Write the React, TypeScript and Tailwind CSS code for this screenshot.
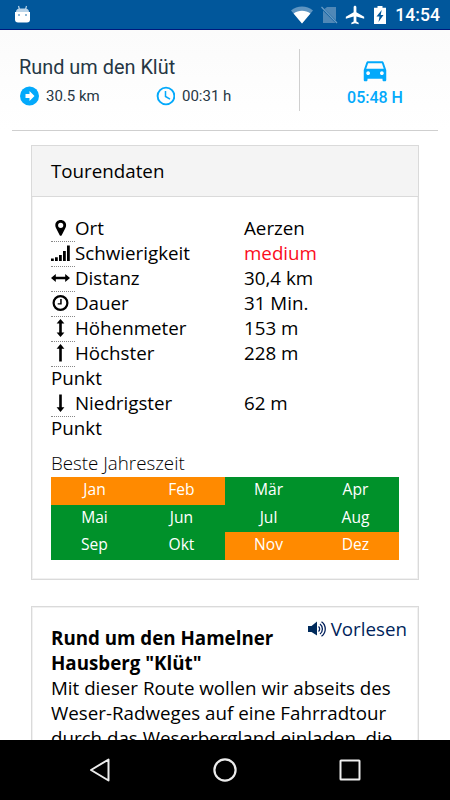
import type { ReactNode } from "react"
import { MdAirplanemodeActive } from "react-icons/md"

const MONTHS = [
  { name: "Jan", best: false },
  { name: "Feb", best: false },
  { name: "Mär", best: true },
  { name: "Apr", best: true },
  { name: "Mai", best: true },
  { name: "Jun", best: true },
  { name: "Jul", best: true },
  { name: "Aug", best: true },
  { name: "Sep", best: true },
  { name: "Okt", best: true },
  { name: "Nov", best: false },
  { name: "Dez", best: false },
]

/* Row icons share a 20x20 box */
const ICONS: Record<string, ReactNode> = {
  pin: (
    <path
      fillRule="evenodd"
      d="M9.7 2C6.600 2 4.300 4.200 4.300 7.200c0 1.100.3 2 .7 2.800l3.700 7.200c.4.8 1.600.8 2 0l3.700-7.200c.4-.8.7-1.700.7-2.800C15.100 4.200 12.700 2 9.700 2zm0 2.700a2.600 2.600 0 1 1 0 5.200 2.600 2.600 0 0 1 0-5.200z"
    />
  ),
  signal: <path d="M0 15.500h2.800V18H0zM4 14.200h2.800V18H4zM8 12h2.800v6H8zM12 8h2.800v10H12zM16 2.500h2.800V18H16z" />,
  horizontal: <path d="M0 10l4.800-4v2.700h9.400V6L19 10l-4.800 4v-2.700H4.800V14z" />,
  clock: (
    <>
      <circle cx="9.500" cy="10" r="6.900" fill="none" stroke="currentColor" strokeWidth="2.200" />
      <path d="M9.200 6h1.500v5.600H6.700v-1.400h2.500z" />
    </>
  ),
  vertical: <path d="M9.500 1l3.900 4.500h-2.600v9h2.600L9.500 19l-3.900-4.500h2.600v-9H5.600z" />,
  up: <path d="M9.500 1l3.900 4.800h-2.600V18.500H8.200V5.800H5.600z" />,
  down: <path d="M9.500 19l3.900-4.800h-2.600V1.500H8.200v12.700H5.600z" />,
}

const ROWS = [
  { icon: "pin", label: "Ort", value: "Aerzen" },
  { icon: "signal", label: "Schwierigkeit", value: "medium", highlight: true },
  { icon: "horizontal", label: "Distanz", value: "30,4 km" },
  { icon: "clock", label: "Dauer", value: "31 Min." },
  { icon: "vertical", label: "Höhenmeter", value: "153 m" },
  { icon: "up", label: "Höchster", more: "Punkt", value: "228 m" },
  { icon: "down", label: "Niedrigster", more: "Punkt", value: "62 m" },
]

function StatusBar() {
  return (
    <header className="flex h-[30px] shrink-0 items-center border-b border-[#00197c] bg-[#01579b] pr-[10px] pl-[15px] text-white">
      <svg width="15" height="18" viewBox="0 0 15 18" className="mt-[-2px]">
        <path d="M3.500 1l1 3.500M11.500 1l-1 3.500" stroke="#b9d3e8" strokeWidth="1.200" />
        <path d="M1 7c0-2 1.500-3.500 3.500-3.500h6C12.500 3.500 14 5 14 7z" fill="#b9d3e8" />
        <path d="M0 7h15v7.500c0 2-1 3-3 3H3c-2 0-3-1-3-3z" fill="#fff" />
        <path d="M3 9.200h2v1.600H3zM10 9.200h2v1.600h-2z" fill="#6ea2ca" />
      </svg>
      <svg width="22" height="18" viewBox="0 0 22 18" className="ml-auto">
        <path d="M11 17.500L0 4.500C3 2 7 .5 11 .5S19 2 22 4.500z" fill="#5f95c1" />
        <path d="M11 17.500L2.600 7.500C5 5.600 8 4.800 11 4.800s6 .8 8.400 2.700z" fill="#fff" />
      </svg>
      <svg width="17" height="18" viewBox="0 0 17 18" className="ml-[8px]">
        <path d="M6 1h9v13.500L3.500 3z" fill="#5088b7" />
        <path d="M2 4.500V17h12.500z" fill="#5088b7" />
        <path d="M.5 1L16 17" stroke="#6a9dc6" strokeWidth="1.200" />
      </svg>
      <MdAirplanemodeActive size={22} className="ml-[6px]" />
      <svg width="12" height="18" viewBox="0 0 12 18" className="ml-[8px]">
        <path
          fillRule="evenodd"
          fill="#fff"
          d="M3.500 0h5v1.800H12V18H0V1.800h3.500zM7.700 4L2.500 10.500h3L4.500 16l5-7H6.700z"
        />
      </svg>
      <span className="mt-[2px] ml-[9px] font-[Roboto] text-[17.600px] leading-none font-medium">14:54</span>
    </header>
  )
}

function TourHeader() {
  return (
    <section className="mx-[12px] flex h-[101px] shrink-0 border-b border-[#cfcfcf] font-[Roboto] text-[#263744]">
      <div className="flex-1 pt-[26px] pl-[7px]">
        <h1 className="text-[19.900px] leading-6">Rund um den Klüt</h1>
        <div className="mt-[5px] flex items-center text-[15px] leading-[22px]">
          <div className="flex w-[136px] items-center gap-[7px]">
            <svg width="20" height="20" viewBox="0 0 20 20">
              <circle cx="10.500" cy="10" r="9.500" fill="#03a9fb" />
              <path d="M6.500 8h4V5l5 5-5 5v-3h-4z" fill="#fff" />
            </svg>
            <span>30.5 km</span>
          </div>
          <div className="flex items-center gap-[7px]">
            <svg width="20" height="20" viewBox="0 0 20 20" fill="none" stroke="#03a9fb">
              <circle cx="11" cy="10" r="8.400" strokeWidth="1.900" />
              <path d="M10.500 5v5.500l4.500 2.700" strokeWidth="1.500" />
            </svg>
            <span>00:31 h</span>
          </div>
        </div>
      </div>
      <div className="mt-[19px] flex h-[62px] w-[139px] flex-col items-center border-l border-[#cfcfcf] text-[#03a9fb]">
        <svg width="30" height="30" viewBox="0 0 24 24" fill="currentColor" className="mt-[6px] ml-[12px]">
          <path d="M18.920 6.010C18.720 5.420 18.160 5 17.500 5h-11c-.66 0-1.210.42-1.420 1.010L3 12v8c0 .55.45 1 1 1h1c.55 0 1-.45 1-1v-1h12v1c0 .55.45 1 1 1h1c.55 0 1-.45 1-1v-8l-2.080-5.990zM6.500 16c-.83 0-1.500-.67-1.500-1.500S5.670 13 6.500 13s1.500.67 1.500 1.500S7.330 16 6.500 16zm11 0c-.83 0-1.500-.67-1.500-1.500s.67-1.500 1.500-1.500 1.500.67 1.500 1.500-.67 1.500-1.500 1.500zM5 11l1.500-4.500h11L19 11H5z" />
        </svg>
        <span className="mt-[3px] ml-[12px] text-[16px] leading-5 font-medium">05:48 H</span>
      </div>
    </section>
  )
}

function TourData() {
  return (
    <section className="mx-[31px] mt-[14px] h-[435px] shrink-0 border-[1.500px] border-[#dadada] shadow-[inset_0_0_0_1px_#f1f1f1]">
      <h2 className="h-[51px] border-b border-[#dadada] bg-[#f4f4f4] pl-[19px] leading-[49px]">Tourendaten</h2>
      <div className="px-[19px] pt-[18px]">
        {ROWS.map((row) => (
          <div key={row.label} className="flex leading-[25px]">
            <div className="w-[193px]">
              <div className="flex h-[25px]">
                <span className="h-[27px] w-[24px] shrink-0 border-b border-dotted border-[#888] pt-[3px]">
                  <svg width="20" height="20" viewBox="0 0 20 20" fill="currentColor">
                    {ICONS[row.icon]}
                  </svg>
                </span>
                {row.label}
              </div>
              {row.more}
            </div>
            <div className={row.highlight ? "text-[#fb0c1c]" : ""}>{row.value}</div>
          </div>
        ))}
        <p className="mt-[10px] leading-[25px] font-light">Beste Jahreszeit</p>
        <div className="mt-[2px] grid h-[83px] grid-cols-4 grid-rows-3 text-center text-[15.600px] leading-[25px] text-white">
          {MONTHS.map((m) => (
            <div key={m.name} className={m.best ? "bg-[#00912a]" : "bg-[#ff8a00]"}>
              {m.name}
            </div>
          ))}
        </div>
      </div>
    </section>
  )
}

function Description() {
  return (
    <section className="mx-[31px] mt-[26px] h-[300px] shrink-0 border-[1.500px] border-[#dadada] pt-[18px] pl-[19px] leading-[25px] shadow-[inset_0_0_0_1px_#f1f1f1]">
      <div className="flex h-[50px] justify-between pr-[11px]">
        <h3 className="w-[240px] font-bold">Rund um den Hamelner Hausberg "Klüt"</h3>
        <a className="mt-[-9px] flex h-[25px] items-center gap-[4px] whitespace-nowrap text-[#001f5b]">
          <svg width="19" height="18" viewBox="0 0 19 18" fill="none" stroke="currentColor" strokeWidth="1.300">
            <path d="M0 6h3.500L9 1.500v14L3.500 12H0z" fill="#002b5c" stroke="none" />
            <path d="M10.500 6.500c1.500 1.200 1.500 3.800 0 5M12 4c3.200 2.500 3.200 7.500 0 10M13.500 1.700c5 3.500 5 11.100 0 14.600" />
          </svg>
          Vorlesen
        </a>
      </div>
      <p className="whitespace-nowrap">
        Mit dieser Route wollen wir abseits des
        <br />
        Weser-Radweges auf eine Fahrradtour
        <br />
        durch das Weserbergland einladen, die
      </p>
    </section>
  )
}

function NavigationBar() {
  return (
    <nav className="flex h-[60px] shrink-0 items-center justify-between bg-black px-[88px]">
      <svg width="24" height="26" viewBox="0 0 24 26" fill="none" stroke="#ececec" strokeWidth="2">
        <path d="M20.500 2.500v21L3 13z" strokeLinejoin="round" />
      </svg>
      <svg width="26" height="26" viewBox="0 0 26 26" fill="none" stroke="#ececec" strokeWidth="2.200">
        <circle cx="13" cy="13" r="10.600" />
      </svg>
      <svg width="24" height="26" viewBox="0 0 24 26" fill="none" stroke="#ececec" strokeWidth="2">
        <rect x="2.500" y="3.500" width="19" height="19" rx="0.500" />
      </svg>
    </nav>
  )
}

export default function App() {
  return (
    <div className="flex h-[800px] w-[450px] flex-col overflow-hidden bg-white font-['Open_Sans',sans-serif] text-[18.750px] text-black">
      <StatusBar />
      <main className="flex min-h-0 flex-1 flex-col overflow-hidden bg-linear-to-b from-[#fbfbfb] to-white to-[100px]">
        <TourHeader />
        <TourData />
        <Description />
      </main>
      <NavigationBar />
    </div>
  )
}
